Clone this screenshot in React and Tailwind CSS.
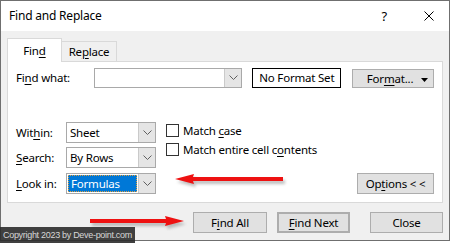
import React from "react";

const U = ({ children }) => (
  <span className="underline underline-offset-[2px] decoration-1">{children}</span>
);

const Chevron = () => (
  <svg width="9" height="6" viewBox="0 0 9 6">
    <path d="M0.5 0.5 L4.5 4.5 L8.5 0.5" fill="none" stroke="#606060" strokeWidth="1" />
  </svg>
);

const Combo = ({ className, children }) => (
  <div className={`flex border border-[#a9a9a9] bg-white ${className}`}>
    <div className="flex-1 flex items-center">{children}</div>
    <div className="w-[17px] bg-[#e5e5e5] border-l border-[#cacaca] flex items-center justify-center">
      <Chevron />
    </div>
  </div>
);

const Btn = ({ className, children }) => (
  <div
    className={`flex items-center justify-center bg-[#e1e1e1] border border-[#adadad] ${className}`}
  >
    {children}
  </div>
);

const Check = ({ children }) => (
  <div className="flex items-center h-[13px]">
    <div className="w-[13px] h-[13px] border border-[#333333] bg-white" />
    <span className="ml-[4px]">{children}</span>
  </div>
);

// red pointer arrow with a soft shadow, dir = "left" | "right"
const RedArrow = ({ className, length, dir }) => {
  const h = 18;
  const mid = 8;
  const pts =
    dir === "left"
      ? `2,${mid} 21,${mid - 5} 20,${mid - 2} ${length},${mid - 2} ${length},${mid + 2} 20,${mid + 2} 21,${mid + 5}`
      : `${length},${mid} ${length - 19},${mid - 5} ${length - 18},${mid - 2} 2,${mid - 2} 2,${mid + 2} ${length - 18},${mid + 2} ${length - 19},${mid + 5}`;
  return (
    <svg className={className} width={length + 6} height={h} viewBox={`0 0 ${length + 6} ${h}`}>
      <defs>
        <filter id={`sh-${dir}`} x="-10%" y="-50%" width="120%" height="200%">
          <feGaussianBlur stdDeviation="1.5" />
        </filter>
      </defs>
      <polygon points={pts} fill="#8a8a8a" opacity="0.55" transform="translate(2,3)" filter={`url(#sh-${dir})`} />
      <polygon points={pts} fill="#ee1111" />
    </svg>
  );
};

export default function App() {
  return (
    <div className="relative w-[452px] h-[243px] bg-white overflow-hidden font-['Noto_Sans',sans-serif] text-[11.5px] tracking-[-0.2px] leading-none text-black">
      <div className="w-[450px] h-[241px] border border-[#6f6f6f] bg-[#f0f0f0] flex flex-col">
        {/* title bar */}
        <div className="h-[30px] bg-white flex items-center pl-[8px]">
          <span className="text-[12px]">Find and Replace</span>
          <span className="ml-auto text-[13px]">?</span>
          <svg className="ml-[37px] mr-[15px]" width="10" height="10" viewBox="0 0 10 10">
            <path d="M0.5 0.5 L9.5 9.5 M9.5 0.5 L0.5 9.5" stroke="#000" strokeWidth="1" />
          </svg>
        </div>

        <div className="px-[6px] pt-[7px] flex flex-col">
          {/* tabs */}
          <div className="flex items-end h-[23px]">
            <div className="relative z-10 -mb-px w-[55px] h-[24px] bg-white border border-b-0 border-[#d9d9d9] flex items-center justify-center">
              Fin<U>d</U>
            </div>
            <div className="w-[55px] h-[20px] border-t border-r border-[#d9d9d9] flex items-center justify-center">
              Re<U>p</U>lace
            </div>
          </div>

          {/* panel */}
          <div className="h-[142px] border border-[#d9d9d9] bg-white pt-[6px] px-[8px] flex flex-col">
            <div className="flex items-start h-[20px]">
              <span className="w-[78px] self-center">
                Fi<U>n</U>d what:
              </span>
              <Combo className="w-[149px] h-[20px]" />
              <div className="ml-[10px] w-[89px] h-[20px] border border-black flex items-center justify-center">
                No Format Set
              </div>
              <Btn className="relative ml-[11px] mt-[1px] w-[82px] h-[19px]">
                <span className="-ml-[6px]">
                  For<U>m</U>at...
                </span>
                <svg className="absolute right-[5px] top-[8px]" width="7" height="4" viewBox="0 0 7 4">
                  <path d="M0 0 L7 0 L3.5 4 Z" fill="#000" />
                </svg>
              </Btn>
            </div>

            <div className="flex mt-[34px]">
              <div className="flex flex-col gap-[4px]">
                <div className="flex items-center">
                  <span className="w-[50px]">
                    Wit<U>h</U>in:
                  </span>
                  <Combo className="w-[90px] h-[21px]">
                    <span className="pl-[3px]">Sheet</span>
                  </Combo>
                </div>
                <div className="flex items-center">
                  <span className="w-[50px]">
                    <U>S</U>earch:
                  </span>
                  <Combo className="w-[90px] h-[21px]">
                    <span className="pl-[3px]">By Rows</span>
                  </Combo>
                </div>
                <div className="flex items-center mt-[1px]">
                  <span className="w-[50px]">
                    <U>L</U>ook in:
                  </span>
                  <Combo className="w-[90px] h-[21px]">
                    <div className="m-[1px] h-[17px] flex-1 flex items-center pl-[2px] bg-[#0078d7] text-white border border-dotted border-[#e0a040]">
                      Formulas
                    </div>
                  </Combo>
                </div>
              </div>

              <div className="ml-[10px] pt-[2px] flex flex-col gap-[6px]">
                <Check>
                  Match <U>c</U>ase
                </Check>
                <Check>
                  Match entire cell c<U>o</U>ntents
                </Check>
              </div>

              <Btn className="ml-auto self-end w-[77px] h-[21px]">
                Op<U>t</U>ions &lt; &lt;
              </Btn>
            </div>
          </div>

          {/* bottom buttons */}
          <div className="flex justify-end mt-[9px]">
            <Btn className="w-[74px] h-[21px]">
              F<U>i</U>nd All
            </Btn>
            <Btn className="ml-[10px] w-[73px] h-[21px] border-2 border-[#0078d7]">
              <U>F</U>ind Next
            </Btn>
            <Btn className="ml-[20px] w-[73px] h-[21px]">Close</Btn>
          </div>
        </div>
      </div>

      <RedArrow className="absolute left-[173px] top-[171px]" length={110} dir="left" />
      <RedArrow className="absolute left-[88px] top-[213px]" length={96} dir="right" />

      <div className="absolute left-0 bottom-0 h-[16px] bg-[#2b2b2b]/90 text-[#d6d6d6] text-[9px] tracking-[-0.3px] whitespace-nowrap font-['Liberation_Sans',sans-serif] flex items-center pl-[3px] pr-[3px]">
        Copyright 2023 by Deve-point.com
      </div>
    </div>
  );
}
